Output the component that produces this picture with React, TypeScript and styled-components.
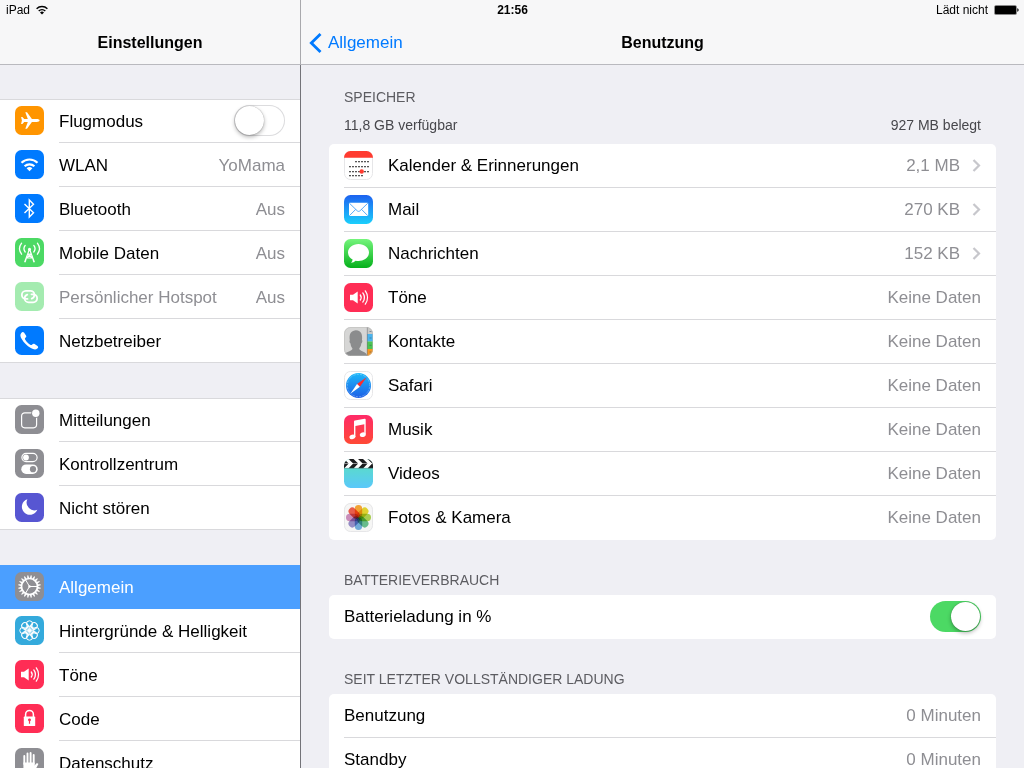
import React from 'react';
import styled, { createGlobalStyle, css } from 'styled-components';

const GlobalStyle = createGlobalStyle`
  *, *::before, *::after { box-sizing: border-box; }
  body {
    margin: 0;
    background: #efeff4;
    color: #000;
    font-family: "Liberation Sans", Arial, Helvetica, sans-serif;
    font-size: 17px;
    line-height: 20px;
    overflow: hidden;
  }
  h1, h2, p { margin: 0; font-size: inherit; font-weight: inherit; }
`;

const Shell = styled.div`
  position: relative;
  display: grid;
  grid-template-columns: 300px minmax(0, 1fr);
  height: 100vh;
  overflow: hidden;
`;

const StatusBar = styled.header`
  position: absolute;
  inset: 0 0 auto 0;
  z-index: 1;
  display: grid;
  grid-template-columns: 1fr auto 1fr;
  align-items: center;
  height: 20px;
  padding: 0 5px 0 6px;
  font-size: 12px;
`;

const StatusItem = styled.div<{ $end?: boolean }>`
  display: flex;
  align-items: center;
  gap: 6px;
  justify-content: ${(p) => (p.$end ? 'flex-end' : 'flex-start')};
`;

const Clock = styled.time`
  font-weight: bold;
`;

const NavBar = styled.div`
  display: grid;
  grid-template-columns: 1fr auto 1fr;
  align-items: center;
  flex: none;
  height: 65px;
  padding: 22px 8px 0;
  background: #f7f7f8;
  border-bottom: 1px solid #b9b9be;
`;

const NavTitle = styled.h1`
  grid-column: 2;
  && { font-size: 16px; font-weight: bold; }
`;

const BackLink = styled.a`
  justify-self: start;
  display: flex;
  align-items: center;
  gap: 6px;
  color: #007aff;
  text-decoration: none;
`;

const SideScroll = styled.nav`
  display: flex;
  flex-direction: column;
  gap: 35px;
  flex: 1;
  min-height: 0;
  padding-top: 34px;
  overflow: hidden;
`;

const DetailScroll = styled.main`
  flex: 1;
  min-height: 0;
  padding: 22px 28px 0;
  overflow: hidden;
`;

const Pane = styled.div<{ $divided?: boolean }>`
  display: flex;
  flex-direction: column;
  min-height: 0;
  min-width: 0;
  ${(p) => p.$divided && css`
    ${NavBar} { border-left: 1px solid #a9a9ad; }
    ${DetailScroll} { border-left: 1px solid #737378; }
  `}
`;

const IconSlot = styled.span<{ $dimmed?: boolean }>`
  flex: none;
  width: 29px;
  height: 29px;
  opacity: ${(p) => (p.$dimmed ? 0.5 : 1)};
  svg { display: block; }
`;

const RowName = styled.span`
  flex: 1;
  white-space: nowrap;
`;

const RowValue = styled.span`
  color: #8e8e93;
  white-space: nowrap;
`;

const RowContent = styled.span`
  display: flex;
  flex: 1;
  align-items: center;
  gap: 12px;
  height: 100%;
  min-width: 0;
  padding-right: 15px;
`;

const rowLayout = css`
  display: flex;
  align-items: center;
  gap: 15px;
  height: 44px;
  color: inherit;
  text-decoration: none;
`;

const sideRow = css`
  ${rowLayout}
  padding-left: 15px;
  ${IconSlot} { margin-bottom: 1px; }
  ${RowContent} { border-bottom: 1px solid #d9d9dc; }
  ${RowName}, ${RowValue} { padding-top: 2px; }
`;

const SideLink = styled.a<{ $selected?: boolean; $dimmed?: boolean }>`
  ${sideRow}
  ${(p) => p.$selected && css`
    background: #4b9fff;
    color: #fff;
    ${RowContent} { border-color: transparent; }
  `}
  ${(p) => p.$dimmed && 'color: #8e8e93;'}
`;

const SideLabel = styled.label`${sideRow}`;

const SideList = styled.div`
  flex: none;
  background: #fff;
  box-shadow: inset 0 1px #d9d9dc;
  & > :last-child {
    border-bottom: 1px solid #d9d9dc;
    ${RowContent} { border-bottom: 0; }
    ${IconSlot} { margin-bottom: 0; }
  }
`;

const cardRow = css`
  ${rowLayout}
  margin-left: 15px;
  border-bottom: 1px solid #d9d9dc;
  &:last-child { border-color: transparent; }
`;

const Card = styled.div`
  background: #fff;
  border-radius: 5px;
  overflow: hidden;
`;
const CardRow = styled.div`${cardRow}`;
const CardLink = styled.a`${cardRow}`;
const CardLabel = styled.label`${cardRow}`;

const Section = styled.section`
  margin-bottom: 30px;
`;

const SectionTitle = styled.h2`
  && { font-size: 14px; }
  padding: 0 15px;
  margin-bottom: 5px;
  color: #5c5c61;
`;

const Summary = styled.p`
  && { font-size: 14px; margin: 8px 0 9px; }
  display: flex;
  justify-content: space-between;
  padding: 0 15px;
  color: #47474c;
`;

const Toggle = styled.input.attrs({ type: 'checkbox', role: 'switch' })`
  appearance: none;
  flex: none;
  display: flex;
  align-items: center;
  width: 51px;
  height: 31px;
  margin: 0;
  padding: 0 1px;
  border-radius: 16px;
  background: #fff;
  box-shadow: inset 0 0 0 1px #dcdcde;
  &::before {
    content: "";
    width: 29px;
    height: 29px;
    border-radius: 50%;
    background: #fff;
    box-shadow: 0 0 1px rgba(0, 0, 0, 0.4), 0 2px 4px rgba(0, 0, 0, 0.3);
  }
  &:checked {
    justify-content: flex-end;
    background: #4cd964;
    box-shadow: none;
  }
`;

const ORANGE = '#ff9500';
const BLUE = '#007aff';
const GREEN = '#4cd964';
const GREY = '#8e8e93';
const RED = '#ff2d55';

function Tile({ fill, children, outlined }: { fill: string; children: React.ReactNode; outlined?: boolean }) {
  return (
    <svg width="29" height="29" viewBox="0 0 29 29" fill="none" aria-hidden="true">
      <rect width="29" height="29" rx="6.5" fill={fill} />
      {outlined && <rect x=".5" y=".5" width="28" height="28" rx="6" stroke="#e6e6e8" />}
      {children}
    </svg>
  );
}

const PlaneIcon = () => (
  <Tile fill={ORANGE}>
    <path fill="#fff" d="M24.6 14.5c0 .8-1.3 1.4-2.8 1.4h-4.900L12 22.700h-1.700l2.500-6.800H9.200L7.400 18H6.100l.8-3.500-.8-3.500h1.300l1.800 2.100h3.600l-2.500-6.800H12l4.900 6.800h4.900c1.500 0 2.800.6 2.800 1.400z" />
  </Tile>
);

const WlanIcon = () => (
  <Tile fill={BLUE}>
    <path stroke="#fff" strokeWidth="2.200" d="M6.500 12.700a11.600 11.600 0 0 1 16 0M9.600 16.200a7.200 7.200 0 0 1 9.800 0" />
    <path fill="#fff" d="M11.600 18.200a4.400 4.400 0 0 1 5.800 0l-2.900 3z" />
  </Tile>
);

const BluetoothIcon = () => (
  <Tile fill={BLUE}>
    <path stroke="#fff" strokeWidth="1.400" d="M9.500 10l9 8.800-4.200 4.300V5.900l4.200 4.300-9 8.800" />
  </Tile>
);

const TowerIcon = () => (
  <Tile fill={GREEN}>
    <path stroke="#fff" strokeWidth="1.200" d="M14.500 11L9.600 24.300M14.500 11l4.900 13.300M12.700 16.200h3.600M11.300 20h6.400M12.700 16.400l5 3.600 1.200 4M16.300 16.400l-5 3.600-1.200 4" />
    <circle cx="14.500" cy="11.200" r="1.500" fill="#fff" />
    <path stroke="#fff" strokeWidth="1.300" strokeLinecap="round" d="M10.200 7.400a5.400 5.400 0 0 0 0 6.600M18.800 7.400a5.400 5.400 0 0 1 0 6.600M6.600 5.200c-2.500 3.300-2.500 7.700 0 11M22.400 5.200c2.500 3.300 2.500 7.700 0 11" />
  </Tile>
);

const HotspotIcon = () => (
  <Tile fill={GREEN}>
    <path stroke="#fff" strokeWidth="1.800" strokeLinecap="round" d="M12.500 16.900h-1.600a4 4 0 0 1-.1-8h4.600c2.200 0 4 1.700 4 3.800 0 1.800-1.100 3.300-2.700 3.900" />
    <path stroke="#fff" strokeWidth="1.800" strokeLinecap="round" d="M16.500 12.300h1.600a4 4 0 0 1 .1 8h-4.600c-2.200 0-4-1.700-4-3.800 0-1.800 1.100-3.300 2.700-3.900" />
  </Tile>
);

const PhoneIcon = () => (
  <Tile fill={BLUE}>
    <path fill="#fff" d="M6.300 6.900c.8-1 1.900-1.300 2.700-.3l2 2.800c.6.900.3 1.600-.6 2.400-.7.700-.6 1.200-.1 2 1.200 2 2.900 3.700 4.900 4.900.8.500 1.300.6 2-.1.800-.9 1.500-1.100 2.400-.6l2.900 2c1 .8.800 1.800-.2 2.600-1.700 1.400-3.700 1-6.500-.5-3.900-2.200-6.900-5.200-9.100-9-1.500-2.600-1.800-4.500-.4-6.200z" />
  </Tile>
);

const NoticeIcon = () => (
  <Tile fill={GREY}>
    <rect x="6.600" y="7.800" width="15" height="15" rx="3.200" stroke="#fff" strokeWidth="1.200" />
    <circle cx="20.800" cy="8.300" r="4.600" fill={GREY} />
    <circle cx="20.800" cy="8.300" r="3.700" fill="#fff" />
  </Tile>
);

const ControlIcon = () => (
  <Tile fill={GREY}>
    <rect x="6.900" y="4.400" width="15.200" height="8.200" rx="4.100" stroke="#fff" strokeWidth="1.200" />
    <circle cx="11" cy="8.500" r="2.900" fill="#fff" />
    <rect x="6.300" y="15.400" width="16.400" height="9.600" rx="4.800" fill="#fff" />
    <circle cx="18" cy="20.200" r="3.100" fill={GREY} />
  </Tile>
);

const MoonIcon = () => (
  <Tile fill="#5756d2">
    <path fill="#fff" d="M12.400 6.200a8 8 0 1 0 9.900 10.600A7.800 7.800 0 0 1 12.400 6.200z" />
  </Tile>
);

const GearIcon = () => (
  <Tile fill={GREY}>
    {Array.from({ length: 20 }, (_, i) => (
      <path key={i} fill="#fff" d="M13.500 6.400l.5-3.200h1l.5 3.200z" transform={`rotate(${i * 18 + 9} 14.500 14.500)`} />
    ))}
    <circle cx="14.500" cy="14.500" r="8" stroke="#fff" strokeWidth="1.700" />
    <path stroke="#fff" strokeWidth="1" d="M14.500 14.500h7.500M14.500 14.500L10.700 8M14.500 14.500L10.700 21" />
    <circle cx="14.500" cy="14.500" r="1.200" fill="#fff" />
  </Tile>
);

const WallpaperIcon = () => (
  <Tile fill="#34aadc">
    {Array.from({ length: 8 }, (_, i) => (
      <circle key={i} cx="14.500" cy="7.900" r="3.100" stroke="#fff" strokeWidth="1" transform={`rotate(${i * 45} 14.500 14.500)`} />
    ))}
    {Array.from({ length: 8 }, (_, i) => (
      <circle key={i} cx="14.500" cy="11.200" r="1.900" stroke="#fff" strokeWidth=".7" transform={`rotate(${i * 45 + 22.5} 14.500 14.500)`} />
    ))}
    <circle cx="14.500" cy="14.500" r="1.600" fill="#fff" />
  </Tile>
);

const SoundIcon = () => (
  <Tile fill={RED}>
    <path fill="#fff" d="M6 11.800h3l4.700-3.300v12L9 17.200H6z" />
    <path stroke="#fff" strokeWidth="1.300" strokeLinecap="round" d="M16.300 12a4.300 4.300 0 0 1 0 5M18.800 9.900a7.700 7.700 0 0 1 0 9.200M21.300 7.900a11.200 11.200 0 0 1 0 13.200" />
  </Tile>
);

const LockIcon = () => (
  <Tile fill={RED}>
    <path stroke="#fff" strokeWidth="1.500" d="M10.600 13v-2.600a3.900 3.900 0 0 1 7.800 0V13" />
    <rect x="8.800" y="12.600" width="11.400" height="9.400" rx=".6" fill="#fff" />
    <path fill={RED} d="M14.500 14.500a1.400 1.400 0 0 0-.6 2.700v2.600h1.200v-2.600a1.400 1.400 0 0 0-.6-2.700z" />
  </Tile>
);

const HandIcon = () => (
  <Tile fill={GREY}>
    <path stroke="#fff" strokeWidth="1.900" strokeLinecap="round" d="M9.300 8v8M12.500 5.400V15M15.600 5V15M18.700 7v9" />
    <path fill="#fff" d="M8.400 14.500h11.200v3l1.700-1.900c.7-.8 1.900-.4 2.100.3L20 22.500c-1 1.700-2.600 2.500-4.700 2.500h-1.500c-3.500 0-5.400-2.300-5.400-5.700z" />
  </Tile>
);

const CALENDAR_DOTS = [
  { y: 10, from: 2, to: 6 },
  { y: 15, from: 0, to: 6 },
  { y: 20, from: 0, to: 6 },
  { y: 24, from: 0, to: 4 },
];

const CalendarIcon = () => (
  <Tile fill="#fff" outlined>
    <path fill="#ff3b30" d="M0 6.700V6.500A6.500 6.500 0 0 1 6.500 0h16A6.500 6.500 0 0 1 29 6.500v.2z" />
    {CALENDAR_DOTS.flatMap(({ y, from, to }) =>
      Array.from({ length: to - from + 1 }, (_, i) => (
        <rect key={`${y}-${i}`} x={5.300 + (from + i) * 3} y={y} width="1.400" height="1.300" fill="#111" />
      )),
    )}
    <circle cx="17.700" cy="20.500" r="2.200" fill="#ff3b30" />
  </Tile>
);

const MailIcon = () => (
  <Tile fill="url(#mailSky)">
    <defs>
      <linearGradient id="mailSky" x1="0" y1="0" x2="0" y2="1">
        <stop stopColor="#1d62f0" /><stop offset="1" stopColor="#1bcffc" />
      </linearGradient>
    </defs>
    <rect x="5" y="7.700" width="19.200" height="13.400" rx=".8" fill="#fff" />
    <path stroke="#2f95f5" strokeWidth=".8" d="M5.400 8.200l7.700 7.500c.9.900 2.100.9 3 0l7.700-7.500M5.400 20.700l6.300-6.300M23.800 20.700l-6.300-6.300" />
  </Tile>
);

const MessageIcon = () => (
  <Tile fill="url(#messageGreen)">
    <defs>
      <linearGradient id="messageGreen" x1="0" y1="0" x2="0" y2="1">
        <stop stopColor="#75f57c" /><stop offset="1" stopColor="#06b01c" />
      </linearGradient>
    </defs>
    <path fill="#fff" d="M14.500 5C8.700 5 4 8.700 4 13.500c0 2.900 1.800 5.500 4.600 7-.1 1.200-.7 2.200-1.600 3.200 1.800-.1 3.400-.8 4.600-2 .9.200 1.900.3 2.900.3C20.300 22 25 18.300 25 13.500S20.300 5 14.500 5z" />
  </Tile>
);

const ContactsIcon = () => (
  <Tile fill="#d6d6d5">
    <defs>
      <clipPath id="contactsTile"><rect width="29" height="29" rx="6.500" /></clipPath>
    </defs>
    <g clipPath="url(#contactsTile)">
      <path fill="#8b8c8d" d="M0 28c1-2.600 3.800-3.200 6-4.100 1.900-.8 2.400-1.200 2.400-2.600C7.200 20 6.800 18.300 6.500 16.400c-1-.4-1.400-2.700-.7-3.200-.6-4.400-.2-9.400 6-9.900 6.100.2 6.800 5.400 6.200 9.800.8.500.3 2.900-.7 3.300-.3 1.900-.8 3.600-2 4.900 0 1.400.5 1.800 2.400 2.600 2.200.9 4.300 1.500 5.300 4.100v1H0z" />
      <path fill="#c9c9c7" d="M23 0h6v7h-6z" />
      <path fill="#4ab4ee" d="M23 7h6v7.500h-6z" />
      <path fill="#4cc552" d="M23 14.500h6V22h-6z" />
      <path fill="#f8961f" d="M23 22h6v7h-6z" />
      <path stroke="#77777a" strokeWidth=".6" d="M23.300 0v29" />
      <path stroke="#30506a" strokeOpacity=".5" strokeWidth="1" d="M25.500 4.500h2M25.500 11h2M25.500 18.300h2M25.500 25h2" />
    </g>
    <rect x=".5" y=".5" width="28" height="28" rx="6" stroke="#b9b9b8" strokeOpacity=".5" />
  </Tile>
);

const SafariIcon = () => (
  <Tile fill="#fff" outlined>
    <defs>
      <linearGradient id="safariDial" x1="0" y1="0" x2="0" y2="1">
        <stop stopColor="#1bb8fa" /><stop offset="1" stopColor="#1d5fe6" />
      </linearGradient>
    </defs>
    <circle cx="14.500" cy="14.500" r="12.500" fill="url(#safariDial)" />
    <circle cx="14.500" cy="14.500" r="11.200" stroke="#fff" strokeOpacity=".6" strokeWidth="1" strokeDasharray=".5 1" />
    <path fill="#ff2a2a" d="M22.600 6.200l-6.700 9.600-2.900-2.700z" />
    <path fill="#fff" d="M6.400 22.800l6.600-9.700 2.900 2.700z" />
  </Tile>
);

const MusicIcon = () => (
  <Tile fill="url(#musicRed)">
    <defs>
      <linearGradient id="musicRed" x1="0" y1="0" x2="0" y2="1">
        <stop stopColor="#ff2a68" /><stop offset="1" stopColor="#ff4a35" />
      </linearGradient>
    </defs>
    <path fill="#fff" d="M10 6.500c0-.6.300-.9.900-1l9.700-1.700c.7-.1 1.100.2 1.100.9v14.500h-1.400V9.300l-8.900 1.700v11H10z" />
    <ellipse cx="8.400" cy="21.900" rx="3" ry="2.300" fill="#fff" transform="rotate(-15 8.400 21.900)" />
    <ellipse cx="18.800" cy="19.700" rx="3" ry="2.300" fill="#fff" transform="rotate(-15 18.800 19.700)" />
  </Tile>
);

const VideosIcon = () => (
  <Tile fill="url(#videoSea)">
    <defs>
      <linearGradient id="videoSea" x1="0" y1="0" x2="0" y2="1">
        <stop offset=".3" stopColor="#5ad9cf" /><stop offset="1" stopColor="#5ac8fa" />
      </linearGradient>
      <clipPath id="videoTile"><rect width="29" height="29" rx="6.500" /></clipPath>
    </defs>
    <g clipPath="url(#videoTile)">
      <path fill="#fff" d="M0 0h29v9.300H0z" />
      <path fill="#1c1c1e" d="M-5 0h5l4.700 4.500L.2 9.300h-5L0 4.500zM4.500 0h5l4.700 4.500-4.500 4.800h-5l4.500-4.800zM14 0h5l4.700 4.500-4.500 4.800h-5l4.500-4.800zM23.500 0h6v9.300h-5.800l4.500-4.800z" />
      <path stroke="#fff" strokeWidth=".5" d="M0 4.500h29" />
      <path stroke="#3c8c88" strokeWidth=".6" d="M0 9.300h29" />
    </g>
  </Tile>
);

const PETALS = ['#fba022', '#e6d51c', '#a5cf3f', '#5cbc86', '#66a9de', '#8f86c8', '#cc86bb', '#f0503c'];

const PhotosIcon = () => (
  <Tile fill="#f6f6f5" outlined>
    {PETALS.map((color, i) => (
      <rect key={color} x="10.800" y="2" width="7.400" height="12.500" rx="3.700" fill={color} fillOpacity=".9" style={{ mixBlendMode: 'multiply' }} transform={`rotate(${i * 45} 14.500 14.500)`} />
    ))}
  </Tile>
);

const Chevron = () => (
  <svg width="9" height="13" viewBox="0 0 9 13" fill="none" aria-hidden="true">
    <path d="M1.500 1l5.500 5.500L1.500 12" stroke="#c7c7cc" strokeWidth="2.200" />
  </svg>
);

type SideItem = { id: string; name: string; icon: React.FC; value?: string; toggle?: boolean; selected?: boolean; dimmed?: boolean };

const SIDE_GROUPS: SideItem[][] = [
  [
    { id: 'flugmodus', name: 'Flugmodus', icon: PlaneIcon, toggle: true },
    { id: 'wlan', name: 'WLAN', icon: WlanIcon, value: 'YoMama' },
    { id: 'bluetooth', name: 'Bluetooth', icon: BluetoothIcon, value: 'Aus' },
    { id: 'mobile-daten', name: 'Mobile Daten', icon: TowerIcon, value: 'Aus' },
    { id: 'hotspot', name: 'Persönlicher Hotspot', icon: HotspotIcon, value: 'Aus', dimmed: true },
    { id: 'netzbetreiber', name: 'Netzbetreiber', icon: PhoneIcon },
  ],
  [
    { id: 'mitteilungen', name: 'Mitteilungen', icon: NoticeIcon },
    { id: 'kontrollzentrum', name: 'Kontrollzentrum', icon: ControlIcon },
    { id: 'nicht-stoeren', name: 'Nicht stören', icon: MoonIcon },
  ],
  [
    { id: 'allgemein', name: 'Allgemein', icon: GearIcon, selected: true },
    { id: 'hintergruende', name: 'Hintergründe & Helligkeit', icon: WallpaperIcon },
    { id: 'toene', name: 'Töne', icon: SoundIcon },
    { id: 'code', name: 'Code', icon: LockIcon },
    { id: 'datenschutz', name: 'Datenschutz', icon: HandIcon },
  ],
];

const STORAGE: { name: string; icon: React.FC; size?: string }[] = [
  { name: 'Kalender & Erinnerungen', icon: CalendarIcon, size: '2,1 MB' },
  { name: 'Mail', icon: MailIcon, size: '270 KB' },
  { name: 'Nachrichten', icon: MessageIcon, size: '152 KB' },
  { name: 'Töne', icon: SoundIcon },
  { name: 'Kontakte', icon: ContactsIcon },
  { name: 'Safari', icon: SafariIcon },
  { name: 'Musik', icon: MusicIcon },
  { name: 'Videos', icon: VideosIcon },
  { name: 'Fotos & Kamera', icon: PhotosIcon },
];

function SideRow({ item }: { item: SideItem }) {
  const Icon = item.icon;
  const content = (
    <>
      <IconSlot $dimmed={item.dimmed}><Icon /></IconSlot>
      <RowContent>
        <RowName>{item.name}</RowName>
        {item.value && <RowValue>{item.value}</RowValue>}
        {item.toggle && <Toggle id={item.id} />}
      </RowContent>
    </>
  );
  if (item.toggle) return <SideLabel htmlFor={item.id}>{content}</SideLabel>;
  return (
    <SideLink href={`#${item.id}`} $selected={item.selected} $dimmed={item.dimmed} aria-current={item.selected ? 'page' : undefined}>
      {content}
    </SideLink>
  );
}

export default function App() {
  return (
    <>
      <GlobalStyle />
      <Shell>
        <StatusBar>
          <StatusItem>
            iPad
            <svg width="12" height="10" viewBox="0 0 12 10" fill="none" aria-hidden="true">
              <path stroke="#000" strokeWidth="1.400" d="M.6 3.700a7.800 7.800 0 0 1 10.800 0M2.700 6a4.800 4.800 0 0 1 6.600 0" />
              <path fill="#000" d="M4 7.400a2.900 2.900 0 0 1 4 0L6 9.600z" />
            </svg>
          </StatusItem>
          <Clock>21:56</Clock>
          <StatusItem $end>
            Lädt nicht
            <svg width="25" height="10" viewBox="0 0 25 10" aria-hidden="true">
              <rect x=".3" y=".3" width="22.400" height="9.400" rx="1.500" fill="#666" />
              <rect x="1" y="1" width="21" height="8" rx="1" fill="#000" />
              <path fill="#222" d="M23.200 3.200c1.200.3 1.500 1 1.500 1.800s-.3 1.500-1.500 1.800z" />
            </svg>
          </StatusItem>
        </StatusBar>

        <Pane>
          <NavBar><NavTitle>Einstellungen</NavTitle></NavBar>
          <SideScroll aria-label="Einstellungen">
            {SIDE_GROUPS.map((group) => (
              <SideList key={group[0].id}>
                {group.map((item) => <SideRow key={item.id} item={item} />)}
              </SideList>
            ))}
          </SideScroll>
        </Pane>

        <Pane $divided>
          <NavBar>
            <BackLink href="#allgemein">
              <svg width="13" height="20" viewBox="0 0 13 20" fill="none" aria-hidden="true">
                <path d="M11.500 1L2.300 10l9.200 9" stroke="#007aff" strokeWidth="2.800" />
              </svg>
              Allgemein
            </BackLink>
            <NavTitle>Benutzung</NavTitle>
          </NavBar>
          <DetailScroll>
            <Section>
              <SectionTitle>SPEICHER</SectionTitle>
              <Summary><span>11,8 GB verfügbar</span><span>927 MB belegt</span></Summary>
              <Card>
                {STORAGE.map(({ name, icon: Icon, size }) => {
                  const content = (
                    <>
                      <IconSlot><Icon /></IconSlot>
                      <RowContent>
                        <RowName>{name}</RowName>
                        <RowValue>{size ?? 'Keine Daten'}</RowValue>
                        {size && <Chevron />}
                      </RowContent>
                    </>
                  );
                  return size
                    ? <CardLink key={name} href={`#${name}`}>{content}</CardLink>
                    : <CardRow key={name}>{content}</CardRow>;
                })}
              </Card>
            </Section>
            <Section>
              <SectionTitle>BATTERIEVERBRAUCH</SectionTitle>
              <Card>
                <CardLabel htmlFor="batterieladung">
                  <RowContent>
                    <RowName>Batterieladung in %</RowName>
                    <Toggle id="batterieladung" defaultChecked />
                  </RowContent>
                </CardLabel>
              </Card>
            </Section>
            <Section>
              <SectionTitle>SEIT LETZTER VOLLSTÄNDIGER LADUNG</SectionTitle>
              <Card>
                <CardRow><RowContent><RowName>Benutzung</RowName><RowValue>0 Minuten</RowValue></RowContent></CardRow>
                <CardRow><RowContent><RowName>Standby</RowName><RowValue>0 Minuten</RowValue></RowContent></CardRow>
              </Card>
            </Section>
          </DetailScroll>
        </Pane>
      </Shell>
    </>
  );
}
